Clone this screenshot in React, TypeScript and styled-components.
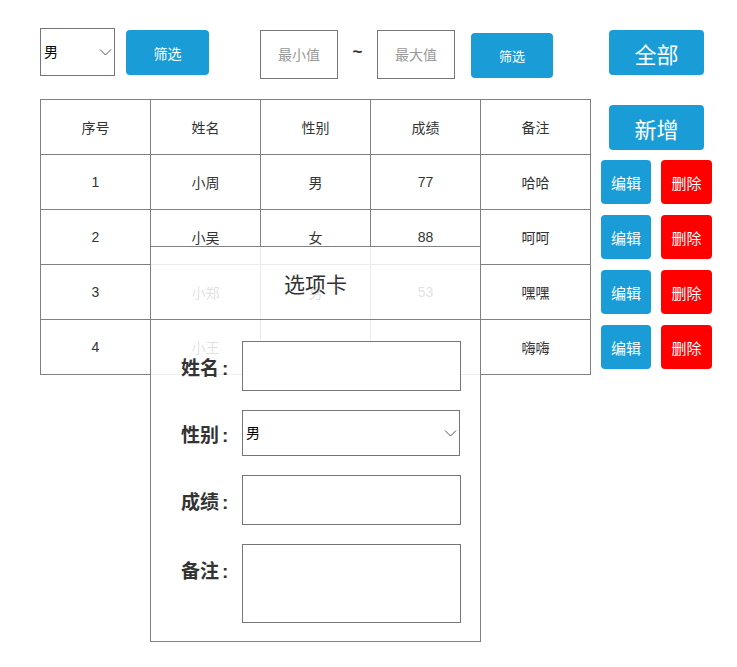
import styled, { createGlobalStyle } from 'styled-components';

const GlobalStyle = createGlobalStyle`
  body {
    margin: 0;
    background: #fff;
    font-family: Arial, "Liberation Sans", "Noto Sans CJK SC", sans-serif;
    color: #333;
  }
`;

const Page = styled.div`
  position: relative;
  width: 737px;
  height: 667px;
  padding: 28px 0 0 40px;
  box-sizing: border-box;
  display: grid;
  grid-template-columns: 561px auto;
  grid-template-rows: 71px auto;
`;

const FilterBar = styled.div`
  display: flex;
  align-items: flex-start;
`;

const SelectBox = styled.div`
  position: relative;
  display: inline-flex;
`;

const Chevron = styled.svg`
  position: absolute;
  right: 3px;
  top: 50%;
  width: 13px;
  height: 8px;
  margin-top: -4px;
  pointer-events: none;
`;

const Select = styled.select<{ $w: number; $h: number }>`
  appearance: none;
  width: ${(p) => p.$w}px;
  height: ${(p) => p.$h}px;
  box-sizing: border-box;
  border: 1px solid #767676;
  border-radius: 0;
  background: #fff;
  font-size: 14px;
  font-family: inherit;
  color: #000;
  padding: 0 3px;
  outline: none;
`;

const Button = styled.button<{ $w: number; $h: number; $size: number; $red?: boolean }>`
  width: ${(p) => p.$w}px;
  height: ${(p) => p.$h}px;
  background: ${(p) => (p.$red ? '#ff0000' : '#1a9dd6')};
  color: #fff;
  border: none;
  border-radius: 4px;
  font-size: ${(p) => p.$size}px;
  font-family: inherit;
  padding: 0;
  cursor: pointer;
`;

const RangeInput = styled.input`
  width: 78px;
  height: 49px;
  box-sizing: border-box;
  border: 1px solid #767676;
  font-size: 14px;
  font-family: inherit;
  text-align: center;
  &::placeholder {
    color: #999;
  }
`;

const Tilde = styled.span`
  width: 39px;
  text-align: center;
  font-size: 17px;
  font-weight: bold;
  line-height: 48px;
`;

const TopRight = styled.div`
  padding: 2px 0 0 8px;
`;

const Table = styled.table`
  border-collapse: collapse;
  width: 551px;
  height: 276px;
  align-self: start;
  td {
    border: 1px solid #808080;
    width: 110px;
    height: 54px;
    text-align: center;
    font-size: 14px;
    color: #333;
    padding: 0;
  }
`;

const Side = styled.div`
  display: flex;
  flex-direction: column;
  padding-top: 6px;
`;

const AddWrap = styled.div`
  padding-left: 8px;
  margin-bottom: 10px;
`;

const ActionRow = styled.div`
  display: flex;
  gap: 10px;
  margin-bottom: 11px;
`;

const Modal = styled.div`
  position: absolute;
  left: 150px;
  top: 246px;
  width: 331px;
  height: 396px;
  box-sizing: border-box;
  border: 1px solid #808080;
  background: rgba(255, 255, 255, 0.85);
  display: flex;
  flex-direction: column;
`;

const ModalHead = styled.div`
  height: 73px;
  border-bottom: 1px solid #808080;
  box-sizing: border-box;
  display: flex;
  align-items: center;
  justify-content: center;
  font-size: 21px;
  color: #333;
`;

const Form = styled.div`
  padding: 21px 0 0 0;
  display: flex;
  flex-direction: column;
  gap: 19px;
`;

const Field = styled.div<{ $top?: boolean }>`
  display: flex;
  align-items: ${(p) => (p.$top ? 'flex-start' : 'center')};
`;

const Label = styled.label<{ $offset?: number }>`
  width: 91px;
  padding: ${(p) => p.$offset || 0}px 0 0 30px;
  box-sizing: border-box;
  font-size: 19px;
  font-weight: bold;
  color: #333;
  span {
    margin-left: 3px;
  }
`;

const FieldInput = styled.input<{ $h: number }>`
  width: 219px;
  height: ${(p) => p.$h}px;
  box-sizing: border-box;
  border: 1px solid #767676;
  background: #fff;
`;

const FieldArea = styled.textarea`
  width: 219px;
  height: 79px;
  box-sizing: border-box;
  border: 1px solid #767676;
  background: #fff;
  resize: none;
`;

const rows = [
  ['1', '小周', '男', '77', '哈哈'],
  ['2', '小吴', '女', '88', '呵呵'],
  ['3', '小郑', '男', '53', '嘿嘿'],
  ['4', '小王', '女', '66', '嗨嗨'],
];

function SexPicker({ w, h }: { w: number; h: number }) {
  return (
    <SelectBox>
      <Select $w={w} $h={h} defaultValue="男">
        <option>男</option>
        <option>女</option>
      </Select>
      <Chevron viewBox="0 0 13 8">
        <path d="M1 1.5 L6.5 7 L12 1.5" fill="none" stroke="#555" strokeWidth="1" />
      </Chevron>
    </SelectBox>
  );
}

export default function App() {
  return (
    <>
      <GlobalStyle />
      <Page>
        <FilterBar>
          <SexPicker w={75} h={48} />
          <div style={{ width: 11 }} />
          <Button $w={83} $h={45} $size={14} style={{ marginTop: 2 }}>
            筛选
          </Button>
          <div style={{ width: 51 }} />
          <RangeInput placeholder="最小值" style={{ marginTop: 2 }} />
          <Tilde>~</Tilde>
          <RangeInput placeholder="最大值" style={{ marginTop: 2 }} />
          <div style={{ width: 16 }} />
          <Button $w={82} $h={45} $size={13} style={{ marginTop: 5 }}>
            筛选
          </Button>
        </FilterBar>
        <TopRight>
          <Button $w={95} $h={45} $size={22}>
            全部
          </Button>
        </TopRight>
        <Table>
          <tbody>
            <tr>
              <td>序号</td>
              <td>姓名</td>
              <td>性别</td>
              <td>成绩</td>
              <td>备注</td>
            </tr>
            {rows.map((r) => (
              <tr key={r[0]}>
                {r.map((c, i) => (
                  <td key={i}>{c}</td>
                ))}
              </tr>
            ))}
          </tbody>
        </Table>
        <Side>
          <AddWrap>
            <Button $w={95} $h={45} $size={22}>
              新增
            </Button>
          </AddWrap>
          {rows.map((r) => (
            <ActionRow key={r[0]}>
              <Button $w={50} $h={44} $size={15}>
                编辑
              </Button>
              <Button $w={51} $h={44} $size={15} $red>
                删除
              </Button>
            </ActionRow>
          ))}
        </Side>
        <Modal>
          <ModalHead>选项卡</ModalHead>
          <Form>
            <Field>
              <Label>
                姓名<span>:</span>
              </Label>
              <FieldInput $h={50} />
            </Field>
            <Field>
              <Label>
                性别<span>:</span>
              </Label>
              <SexPicker w={218} h={46} />
            </Field>
            <Field>
              <Label>
                成绩<span>:</span>
              </Label>
              <FieldInput $h={50} />
            </Field>
            <Field $top>
              <Label $offset={12}>
                备注<span>:</span>
              </Label>
              <FieldArea />
            </Field>
          </Form>
        </Modal>
      </Page>
    </>
  );
}
